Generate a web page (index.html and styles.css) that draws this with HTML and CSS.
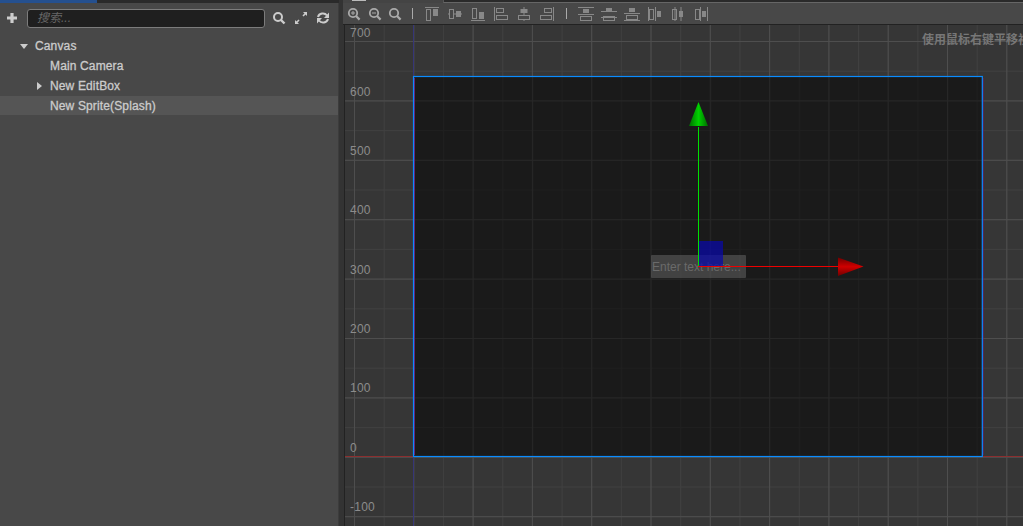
FILE: index.html
```html
<!DOCTYPE html>
<html lang="zh">
<head>
<meta charset="utf-8">
<title>Scene editor</title>
<link rel="stylesheet" href="styles.css">
</head>
<body>
<div class="app">
  <aside class="hierarchy">
    <div class="tabstrip"><div class="tab"></div></div>
    <div class="panel">
      <div class="tools">
        <svg class="ic plus" viewBox="0 0 12 12"><path d="M6 1v10M1 6h10" stroke="#ccc" stroke-width="3.200" fill="none"/></svg>
        <div class="search">搜索...</div>
        <div class="tool-icons">
          <svg class="ic" viewBox="0 0 14 14"><circle cx="6" cy="6" r="4" stroke="#ccc" stroke-width="2" fill="none"/><path d="M9 9l3.500 3.500" stroke="#ccc" stroke-width="2.400"/></svg>
          <svg class="ic" viewBox="0 0 14 14"><path d="M1.500 12.500L5 9M9 5l3.500-3.500" stroke="#ccc" stroke-width="1.600"/><path d="M1 9l4 4H1zM13 5L9 1h4z" fill="#ccc"/></svg>
          <svg class="ic" viewBox="0 0 14 14"><path d="M2 6a5 4.500 0 0 1 9-1.500M12 8a5 4.500 0 0 1-9 1.500" stroke="#ccc" stroke-width="2" fill="none"/><path d="M13 1.500V7H8zM1 12.500V7h5z" fill="#ccc"/></svg>
        </div>
      </div>
      <ul class="tree">
        <li class="row"><span class="caret down"></span><span class="name">Canvas</span></li>
        <li class="row lvl2"><span class="name">Main Camera</span></li>
        <li class="row lvl2"><span class="caret right"></span><span class="name">New EditBox</span></li>
        <li class="row lvl2 selected"><span class="name">New Sprite(Splash)</span></li>
      </ul>
    </div>
  </aside>
  <main class="scene">
    <div class="scene-top">
      <div class="st-tab"><span class="st-mark"></span></div>
      <div class="st-rest"></div>
    </div>
    <div class="toolbar">
      <div class="zooms">
        <svg class="zi" viewBox="0 0 14 14"><circle cx="6" cy="6" r="4.200" stroke="#aaa" stroke-width="1.800" fill="none"/><path d="M9 9l3.600 3.600" stroke="#aaa" stroke-width="2.200"/><path d="M4 6h4M6 4v4" stroke="#aaa"/></svg>
        <svg class="zi" viewBox="0 0 14 14"><circle cx="6" cy="6" r="4.200" stroke="#aaa" stroke-width="1.800" fill="none"/><path d="M9 9l3.600 3.600" stroke="#aaa" stroke-width="2.200"/><path d="M4 6h4" stroke="#aaa"/></svg>
        <svg class="zi" viewBox="0 0 14 14"><circle cx="6" cy="6" r="4.200" stroke="#aaa" stroke-width="1.800" fill="none"/><path d="M9 9l3.600 3.600" stroke="#aaa" stroke-width="2.200"/></svg>
      </div>
      <span class="sep first"></span>
      <div class="aligns">
        <svg class="ai" viewBox="0 0 16 16"><g fill="none" stroke="#888"><path d="M1 1.500h14"/><rect x="2.500" y="3.500" width="4" height="11"/></g><rect x="9" y="3" width="5" height="7" fill="#888"/></svg>
        <svg class="ai" viewBox="0 0 16 16"><g fill="none" stroke="#888"><path d="M1 8h2M6 8h3M14 8h1"/><rect x="2.500" y="3.500" width="4" height="9"/></g><rect x="9" y="5" width="5" height="6" fill="#888"/></svg>
        <svg class="ai" viewBox="0 0 16 16"><g fill="none" stroke="#888"><path d="M1 14.500h14"/><rect x="2.500" y="2.500" width="4" height="10"/></g><rect x="9" y="6" width="5" height="7" fill="#888"/></svg>
        <svg class="ai" viewBox="0 0 16 16"><g fill="none" stroke="#888"><path d="M1.500 1v14"/><rect x="3.500" y="9.500" width="11" height="4"/><rect x="3.500" y="2.500" width="7" height="4"/></g></svg>
        <svg class="ai" viewBox="0 0 16 16"><g fill="none" stroke="#888"><path d="M8 1v2M8 6v3M8 13v2"/><rect x="2.500" y="9.500" width="11" height="4"/></g><rect x="4.500" y="3" width="7" height="4" fill="#888"/></svg>
        <svg class="ai" viewBox="0 0 16 16"><g fill="none" stroke="#888"><path d="M14.500 1v14"/><rect x="1.500" y="9.500" width="11" height="4"/><rect x="5.500" y="2.500" width="7" height="4"/></g></svg>
      </div>
      <span class="sep"></span>
      <div class="aligns second">
        <svg class="ai" viewBox="0 0 16 16"><g fill="none" stroke="#888"><path d="M0 1.500h16M0 8.500h16"/><rect x="2.500" y="10.500" width="11" height="4"/></g><rect x="5" y="3" width="6" height="4" fill="#888"/></svg>
        <svg class="ai" viewBox="0 0 16 16"><g fill="none" stroke="#888"><path d="M0 5.500h16M0 11.500h16"/><rect x="2.500" y="10.500" width="11" height="4"/></g><rect x="5" y="2" width="6" height="4" fill="#888"/></svg>
        <svg class="ai" viewBox="0 0 16 16"><g fill="none" stroke="#888"><path d="M0 7.500h16M0 14.500h16"/><rect x="2.500" y="9.500" width="11" height="4"/></g><rect x="5" y="2" width="6" height="4" fill="#888"/></svg>
        <svg class="ai" viewBox="0 0 16 16"><g fill="none" stroke="#888"><path d="M1.500 1v14M8.500 1v14"/><rect x="2.500" y="3.500" width="4" height="10"/></g><rect x="10" y="5" width="4" height="6" fill="#888"/></svg>
        <svg class="ai" viewBox="0 0 16 16"><g fill="none" stroke="#888"><path d="M5 1v14M11 1v14"/><rect x="2.500" y="3.500" width="4" height="10"/></g><rect x="9" y="5" width="4" height="6" fill="#888"/></svg>
        <svg class="ai" viewBox="0 0 16 16"><g fill="none" stroke="#888"><path d="M7.500 1v14M14.500 1v14"/><rect x="2.500" y="3.500" width="4" height="10"/></g><rect x="9" y="5" width="4" height="6" fill="#888"/></svg>
      </div>
    </div>
    <div class="stage">
      <svg class="grid" width="678" height="501" viewBox="345 25 678 501">
        <defs>
          <pattern id="minor" x="354" y="11.300" width="29.650" height="29.700" patternUnits="userSpaceOnUse">
            <path d="M0.500 0V29.700M0 0.500H29.650" stroke="#404040" fill="none"/>
          </pattern>
          <pattern id="major" x="354" y="41" width="59.300" height="59.400" patternUnits="userSpaceOnUse">
            <path d="M0.500 0V59.400M0 0.500H59.300" stroke="#4e4e4e" fill="none"/>
          </pattern>
          <pattern id="minor-dark" x="354" y="11.300" width="29.650" height="29.700" patternUnits="userSpaceOnUse">
            <path d="M0.500 0V29.700M0 0.500H29.650" stroke="#1f1f1f" fill="none"/>
          </pattern>
          <pattern id="major-dark" x="354" y="41" width="59.300" height="59.400" patternUnits="userSpaceOnUse">
            <path d="M0.500 0V59.400M0 0.500H59.300" stroke="#272727" fill="none"/>
          </pattern>
          <linearGradient id="greenhead" x1="0" x2="1" y1="0" y2="0"><stop offset="0" stop-color="#006d00"/><stop offset=".5" stop-color="#00d000"/><stop offset="1" stop-color="#006d00"/></linearGradient>
          <linearGradient id="redhead" x1="0" x2="0" y1="0" y2="1"><stop offset="0" stop-color="#700000"/><stop offset=".5" stop-color="#d00000"/><stop offset="1" stop-color="#700000"/></linearGradient>
        </defs>
        <rect class="bg" x="345" y="25" width="678" height="501"/>
        <rect x="345" y="25" width="678" height="501" fill="url(#minor)"/>
        <rect x="345" y="25" width="678" height="501" fill="url(#major)"/>
        <path class="axis-y" d="M413.500 25V526"/>
        <path class="axis-x" d="M345 456.500H1023"/>
        <rect class="design" x="413.500" y="76.500" width="569" height="380"/>
        <rect x="414" y="77" width="568" height="379" fill="url(#minor-dark)"/>
        <rect x="414" y="77" width="568" height="379" fill="url(#major-dark)"/>
        <path class="magenta" d="M414.500 78V455M983 78V455"/>
        <rect class="frame" x="413.500" y="76.500" width="568.800" height="380"/>
        <g class="labels">
          <text x="350" y="37">700</text><text x="350" y="96">600</text><text x="350" y="155">500</text><text x="350" y="214">400</text><text x="350" y="274">300</text><text x="350" y="333">200</text><text x="350" y="392">100</text><text x="350" y="452">0</text><text x="350" y="511">-100</text>
        </g>
        <text class="hint" x="922" y="44">使用鼠标右键平移视图焦点</text>
        <rect class="editbox" x="651" y="255" width="95" height="23" rx="1"/>
        <text class="placeholder" x="652" y="271">Enter text here...</text>
        <rect class="square" x="698" y="241" width="25" height="25"/>
        <rect class="gl" x="698" y="127" width="1" height="140"/>
        <path d="M698.500 102L708 126H689z" fill="url(#greenhead)"/>
        <path class="rl" d="M698 266.500H838"/>
        <path d="M863.500 266.500L838 257.500V276z" fill="url(#redhead)"/>
      </svg>
    </div>
  </main>
</div>
</body>
</html>
```
FILE: styles.css
```css
* { box-sizing: border-box; }
html, body { margin: 0; padding: 0; height: 100%; overflow: hidden; background: #333; }
.app { display: flex; width: 1023px; height: 526px; font-family: "Liberation Sans", Arial, sans-serif; }

.hierarchy { width: 339px; flex: none; display: flex; flex-direction: column; }
.tabstrip { height: 3px; background: #2a2a2a; flex: none; }
.tab { width: 97px; height: 3px; background: #25508f; }
.panel { flex: 1; background: #484848; border-right: 1px solid #3c3c3c; }
.tools { display: flex; align-items: center; height: 30px; padding: 0 7px 0 6px; }
.ic { width: 14px; height: 14px; display: block; }
.plus { width: 12px; height: 12px; }
.search { width: 238px; height: 19px; margin-left: 9px; padding-left: 9px; background: #1f1f1f; border: 1px solid #7c7c7c; border-radius: 3px; color: #666; font-size: 12px; line-height: 17px; font-style: italic; font-family: "Liberation Sans", "Noto Sans CJK SC", sans-serif; }
.tool-icons { display: flex; gap: 8px; margin-left: 7px; }
.tree { list-style: none; margin: 3px 0 0; padding: 0; }
.row { display: flex; align-items: center; height: 20px; padding-left: 35px; position: relative; color: #cfcfcf; font-size: 12px; font-weight: 400; letter-spacing: 0.14px; -webkit-text-stroke: 0.3px #c8c8c8; }
.lvl2 { padding-left: 50px; }
.selected { background: #555; height: 19px; }
.caret { position: absolute; width: 0; height: 0; }
.caret.down { left: 20px; top: 8px; border-left: 4.500px solid transparent; border-right: 4.500px solid transparent; border-top: 5px solid #ccc; }
.caret.right { left: 37px; top: 6px; border-top: 4px solid transparent; border-bottom: 4px solid transparent; border-left: 5px solid #ccc; }

.scene { flex: 1; display: flex; flex-direction: column; min-width: 0; background: #333; }
.scene-top { height: 3px; flex: none; margin-left: 4px; display: flex; }
.st-tab { width: 100px; flex: none; background: #444; padding-left: 9px; }
.st-mark { display: block; width: 14px; height: 1px; background: #bbb; }
.st-rest { flex: 1; background: #2a2a2a; border-left: 1px solid #555; border-bottom: 1px solid #666; }
.toolbar { height: 22px; flex: none; margin-left: 4px; display: flex; align-items: center; background: #484848; border-bottom: 1px solid #222; padding-left: 4px; }
.zooms { display: flex; gap: 6.500px; }
.zi { width: 14px; height: 14px; display: block; }
.sep { width: 1px; height: 11px; background: #aaa; flex: none; margin-left: 11px; }
.sep.first { margin-left: 10px; }
.aligns { display: flex; gap: 7px; margin-left: 11px; }
.aligns.second { margin-left: 11px; }
.ai { width: 16px; height: 16px; display: block; }
.stage { flex: 1; min-height: 0; border-left: 1px solid #222; margin-left: 5px; }
.grid { display: block; }
.bg { fill: #363636; }
.axis-y { stroke: #363678; fill: none; }
.axis-x { stroke: #8c2f2f; fill: none; }
.design { fill: #1a1a1a; }
.magenta { stroke: #701a70; fill: none; }
.frame { fill: none; stroke: #0a8cff; stroke-width: 1.200; }
.labels text { font: 12px "Liberation Sans", Arial, sans-serif; fill: #8c8c8c; letter-spacing: 0.25px; }
.hint { font: bold 12px "Noto Sans CJK SC", sans-serif; fill: #777; }
.square { fill: rgba(8, 8, 170, 0.72); }
.editbox { fill: rgba(100, 100, 100, 0.55); }
.placeholder { font: 12px "Liberation Sans", Arial, sans-serif; fill: #6a6a6a; }
.gl { fill: #00e000; }
.rl { stroke: #ee0000; fill: none; }
```
